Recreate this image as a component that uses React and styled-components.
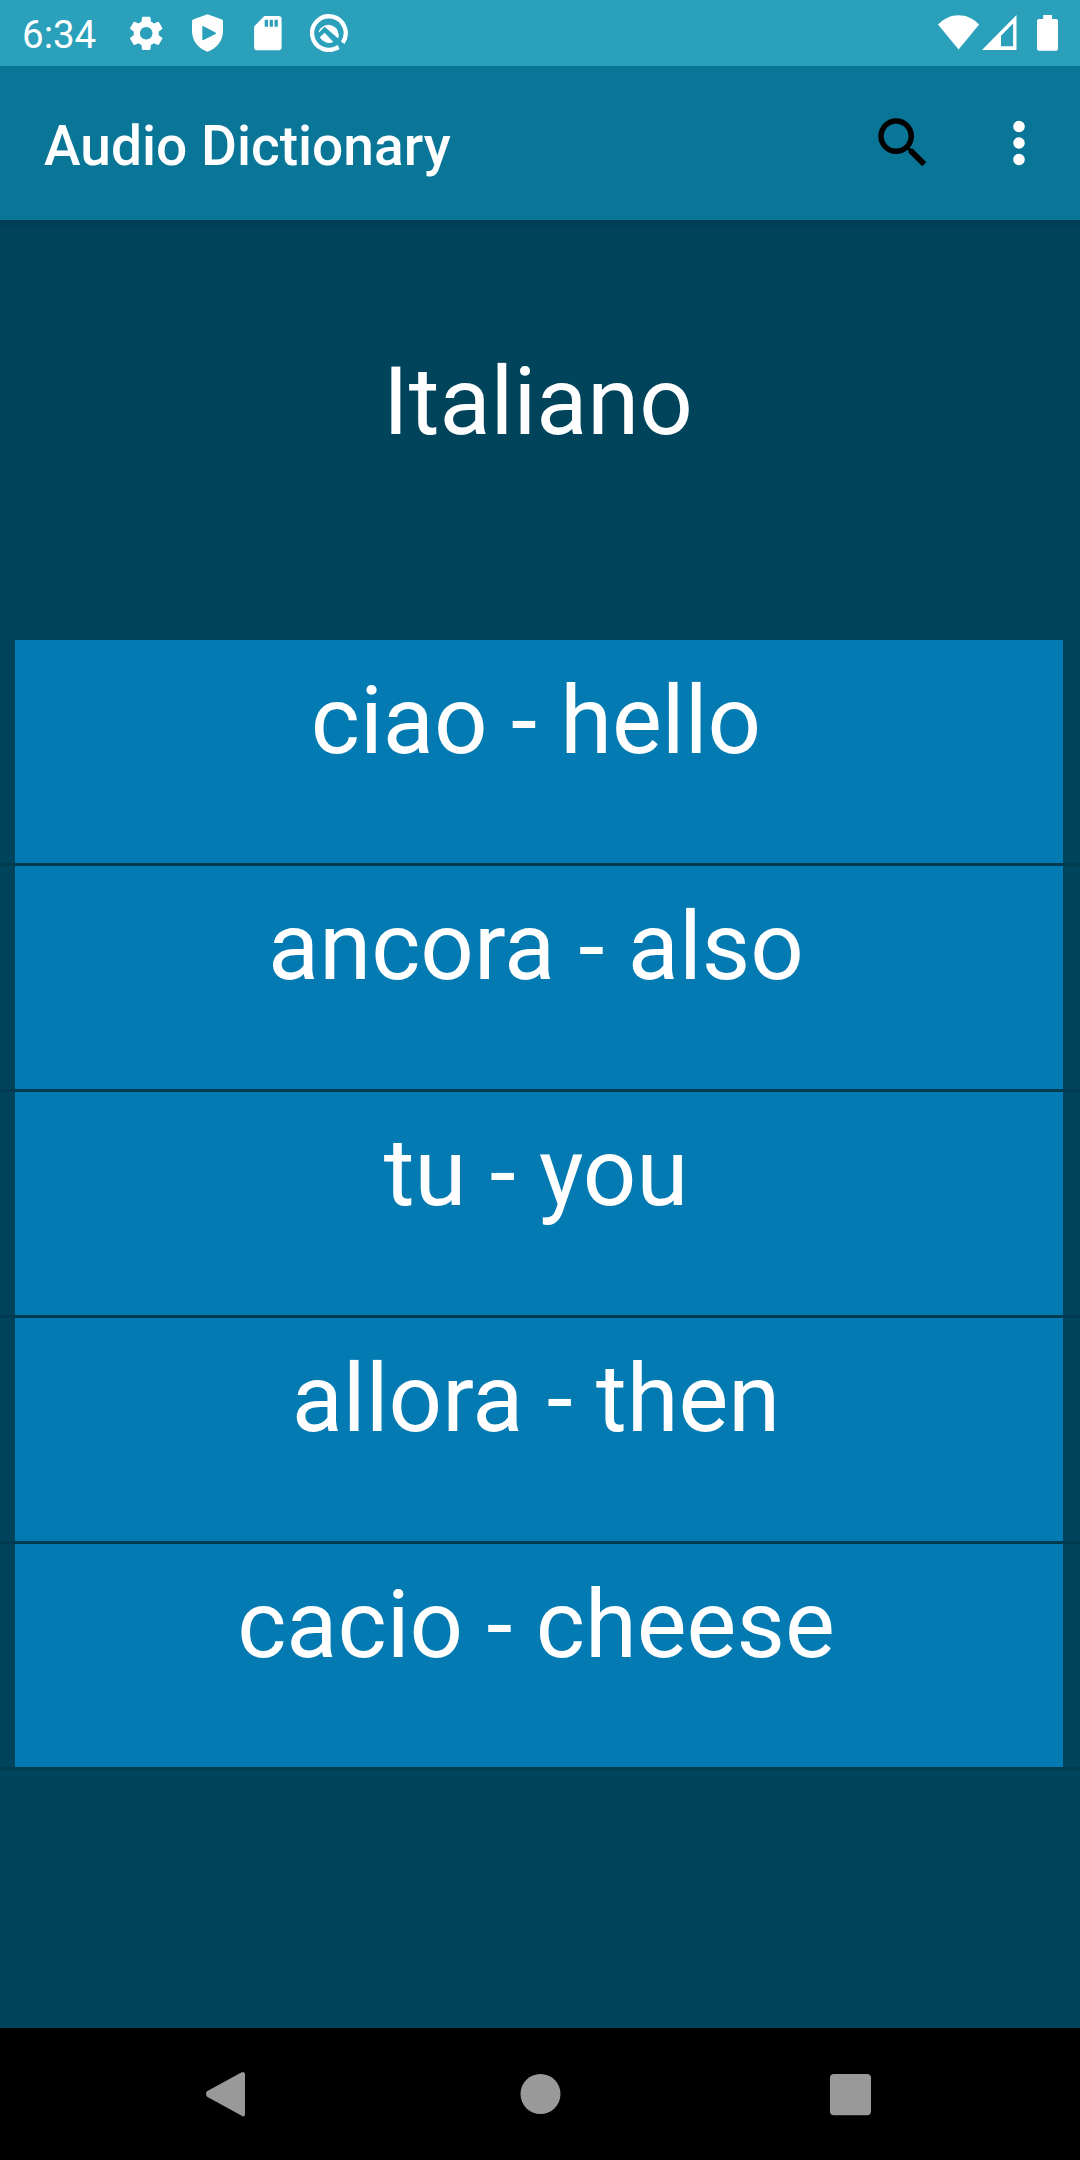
import React from "react";
import styled, { createGlobalStyle } from "styled-components";

const GlobalStyle = createGlobalStyle`
  * { box-sizing: border-box; }
  body { margin: 0; background: #00445c; }
`;

const Screen = styled.div`
  width: 1080px;
  height: 2160px;
  display: flex;
  flex-direction: column;
  overflow: hidden;
  background: #00445c;
  color: #fff;
  font-family: Roboto, "Liberation Sans", sans-serif;
`;

const StatusBar = styled.header`
  flex: none;
  height: 66px;
  display: flex;
  justify-content: space-between;
  background: #2aa0ba;
`;

const StatusGroup = styled.div`
  display: flex;
  align-items: flex-start;
  padding: ${(p) => p.$pad};
`;

const Clock = styled.span`
  width: 97px;
  margin-left: 22px;
  padding-top: 12px;
  font-size: 38.5px;
  line-height: 46px;
`;

const Glyph = styled.svg`
  flex: none;
  display: block;
  width: ${(p) => p.$w}px;
  height: ${(p) => p.$h || p.$w}px;
  fill: ${(p) => p.$color || "#fff"};
`;

const AppBar = styled.nav`
  flex: none;
  height: 154px;
  display: flex;
  align-items: center;
  padding: 0 28px 0 44px;
  background: #0a7697;
`;

const Title = styled.h1`
  flex: 1;
  margin: 0;
  padding-top: 6px;
  font-size: 55.1px;
  line-height: 64px;
  font-weight: 500;
`;

const IconButton = styled.button`
  display: flex;
  padding: 0;
  border: 0;
  background: none;
  margin-left: ${(p) => p.$gap || 0}px;
`;

const Content = styled.main`
  flex: 1;
  display: flex;
  flex-direction: column;
  background: linear-gradient(#003d54, #00445c 12px);
`;

const Language = styled.h2`
  margin: 0;
  height: 420px;
  padding: 127px 4px 0 0;
  font-size: 94px;
  line-height: 110px;
  font-weight: 400;
  text-align: center;
`;

const WordList = styled.ul`
  list-style: none;
  margin: 0;
  padding: 0;
`;

const WordRow = styled.li`
  height: 226px;
  padding: 0 17px 0 15px;
  border-bottom: 3px solid #003b50;
`;

const WordCard = styled.div`
  height: 223px;
  padding: 26px 6px 0 0;
  background: #037bb2;
  font-size: 94px;
  line-height: 110px;
  text-align: center;
`;

const NavBar = styled.footer`
  flex: none;
  height: 132px;
  display: flex;
  align-items: flex-start;
  justify-content: space-between;
  padding: 36px 199px 0 196px;
  background: #000;
`;

const words = [
  ["ciao", "hello"],
  ["ancora", "also"],
  ["tu", "you"],
  ["allora", "then"],
  ["cacio", "cheese"],
];

const GearIcon = () => (
  <Glyph $w={36} viewBox="0 0 36 36">
    <path
      transform="translate(-3.6 -2.5) scale(1.735)"
      d="M19.14 12.94c.04-.3.06-.61.06-.94s-.02-.64-.07-.94l2.03-1.58a.49.49 0 0 0 .12-.61l-1.92-3.32a.488.488 0 0 0-.59-.22l-2.39.96c-.5-.38-1.03-.7-1.62-.94l-.36-2.54a.484.484 0 0 0-.48-.41h-3.84c-.24 0-.43.17-.47.41l-.36 2.54c-.59.24-1.13.57-1.62.94l-2.39-.96c-.22-.08-.47 0-.59.22L2.74 8.87c-.12.21-.08.47.12.61l2.03 1.58c-.05.3-.09.63-.09.94s.02.64.07.94l-2.03 1.58a.49.49 0 0 0-.12.61l1.92 3.32c.12.22.37.29.59.22l2.39-.96c.5.38 1.03.7 1.62.94l.36 2.54c.05.24.24.41.48.41h3.84c.24 0 .44-.17.47-.41l.36-2.54c.59-.24 1.13-.56 1.62-.94l2.39.96c.22.08.47 0 .59-.22l1.92-3.32c.12-.22.07-.47-.12-.61zM12 15.6c-1.98 0-3.6-1.62-3.6-3.6s1.62-3.6 3.6-3.6 3.6 1.62 3.6 3.6-1.62 3.6-3.6 3.6z"
    />
  </Glyph>
);

const ShieldIcon = () => (
  <Glyph $w={32} $h={38} viewBox="0 0 32 38">
    <path
      fillRule="evenodd"
      d="M15.5.3 30 5.5Q31 6 31 7.2V17c0 9.5-6.2 17.6-15.5 20.8C6.2 34.6 0 26.5 0 17V7.2Q0 6 1 5.5ZM10.3 13v12.2q0 1.3 1.2.8l12-5.9q1.3-.8 0-1.6l-12-6.3q-1.2-.5-1.2.8Z"
    />
  </Glyph>
);

const CardIcon = () => (
  <Glyph $w={28} $h={35} viewBox="0 0 28 35">
    <path
      fillRule="evenodd"
      d="M10.3 0H24.5Q27.6 0 27.6 3V31.2Q27.6 34.3 24.5 34.3H3.2Q.1 34.3.1 31.2V10.5ZM10.7 3.7V10.8H14V3.7ZM15.7 3.7V10.8H18.9V3.7ZM20.5 3.7V10.8H23.8V3.7Z"
    />
  </Glyph>
);

const RingIcon = () => (
  <Glyph $w={38} viewBox="-19 -19 38 38">
    <path
      d="M8.9 14.3A16.8 16.8 0 1 1 13.7 9.7"
      fill="none"
      stroke="#fff"
      strokeWidth="4.3"
    />
    <path d="M5.6 14.4 8.7 12 10.6 15.9 7.6 17.6Z" />
    <path d="M-10.2 -2A10.4 10.4 0 0 1 9.2 5.4L-4.4 -6.2-10.2 -.2Z" />
    <path d="M-9.2 4.2-4.4 -.2 4.3 9A10.4 10.4 0 0 1-9.2 4.2Z" />
    <path d="M-4.4 -3.1 12.6 13.4" fill="none" stroke="#2aa0ba" strokeWidth="2.4" />
  </Glyph>
);

const WifiIcon = () => (
  <Glyph $w={42} $h={35} viewBox="0 0 42 35">
    <path d="M0 9.5C5.8 3.5 12.8.2 20.6.2S35.3 3.5 41.1 9.5L20.6 34.5Z" />
  </Glyph>
);

const SignalIcon = () => (
  <Glyph $w={35} $h={35} viewBox="0 0 35 35">
    <path fillRule="evenodd" d="M34.5 0V35H0ZM31.1 8.6 19 20.7V31.3H31.1Z" />
  </Glyph>
);

const BatteryIcon = () => (
  <Glyph $w={21} $h={36} viewBox="0 0 21 36">
    <path d="M6.2 0H15V4H19Q21 4 21 6V33.8Q21 35.8 19 35.8H2Q0 35.8 0 33.8V6Q0 4 2 4H6.2Z" />
  </Glyph>
);

export default function App() {
  return (
    <>
      <GlobalStyle />
      <Screen>
        <StatusBar>
          <StatusGroup>
            <Clock>6:34</Clock>
            <StatusGroup $pad="15px 0 0 10px">
              <GearIcon />
            </StatusGroup>
            <StatusGroup $pad="14px 0 0 27px">
              <ShieldIcon />
            </StatusGroup>
            <StatusGroup $pad="16px 0 0 30px">
              <CardIcon />
            </StatusGroup>
            <StatusGroup $pad="14px 0 0 28px">
              <RingIcon />
            </StatusGroup>
          </StatusGroup>
          <StatusGroup $pad="15px 22px 0 0">
            <WifiIcon />
            <StatusGroup $pad="0 20px 0 2px">
              <SignalIcon />
            </StatusGroup>
            <BatteryIcon />
          </StatusGroup>
        </StatusBar>
        <AppBar>
          <Title>Audio Dictionary</Title>
          <IconButton aria-label="Search">
            <Glyph $w={66} $color="#000" viewBox="0 0 24 24">
              <path d="M15.5 14h-.79l-.28-.27A6.471 6.471 0 0 0 16 9.5 6.5 6.5 0 1 0 9.5 16c1.61 0 3.09-.59 4.23-1.57l.27.28v.79l5 4.99L20.49 19zm-6 0C7.01 14 5 11.99 5 9.5S7.01 5 9.5 5 14 7.01 14 9.5 11.99 14 9.5 14z" />
            </Glyph>
          </IconButton>
          <IconButton aria-label="More options" $gap={50}>
            <Glyph $w={66} viewBox="0 0 24 24">
              <circle cx="12" cy="6" r="2.1" />
              <circle cx="12" cy="12" r="2.1" />
              <circle cx="12" cy="18" r="2.1" />
            </Glyph>
          </IconButton>
        </AppBar>
        <Content>
          <Language>Italiano</Language>
          <WordList>
            {words.map(([word, meaning]) => (
              <WordRow key={word}>
                <WordCard>
                  {word} - {meaning}
                </WordCard>
              </WordRow>
            ))}
          </WordList>
        </Content>
        <NavBar>
          <Glyph $w={60} $color="#999" viewBox="0 0 60 60">
            <path d="M11 27.3 45.3 8.4Q49 7 49 10.5V49.5Q49 54 45.3 51.6L11 32.7Q9 30 11 27.3Z" />
          </Glyph>
          <Glyph $w={60} $color="#999" viewBox="0 0 60 60">
            <circle cx="31.5" cy="30" r="20" />
          </Glyph>
          <Glyph $w={60} $color="#999" viewBox="0 0 60 60">
            <rect x="9" y="10" width="41" height="41.3" rx="4" />
          </Glyph>
        </NavBar>
      </Screen>
    </>
  );
}
